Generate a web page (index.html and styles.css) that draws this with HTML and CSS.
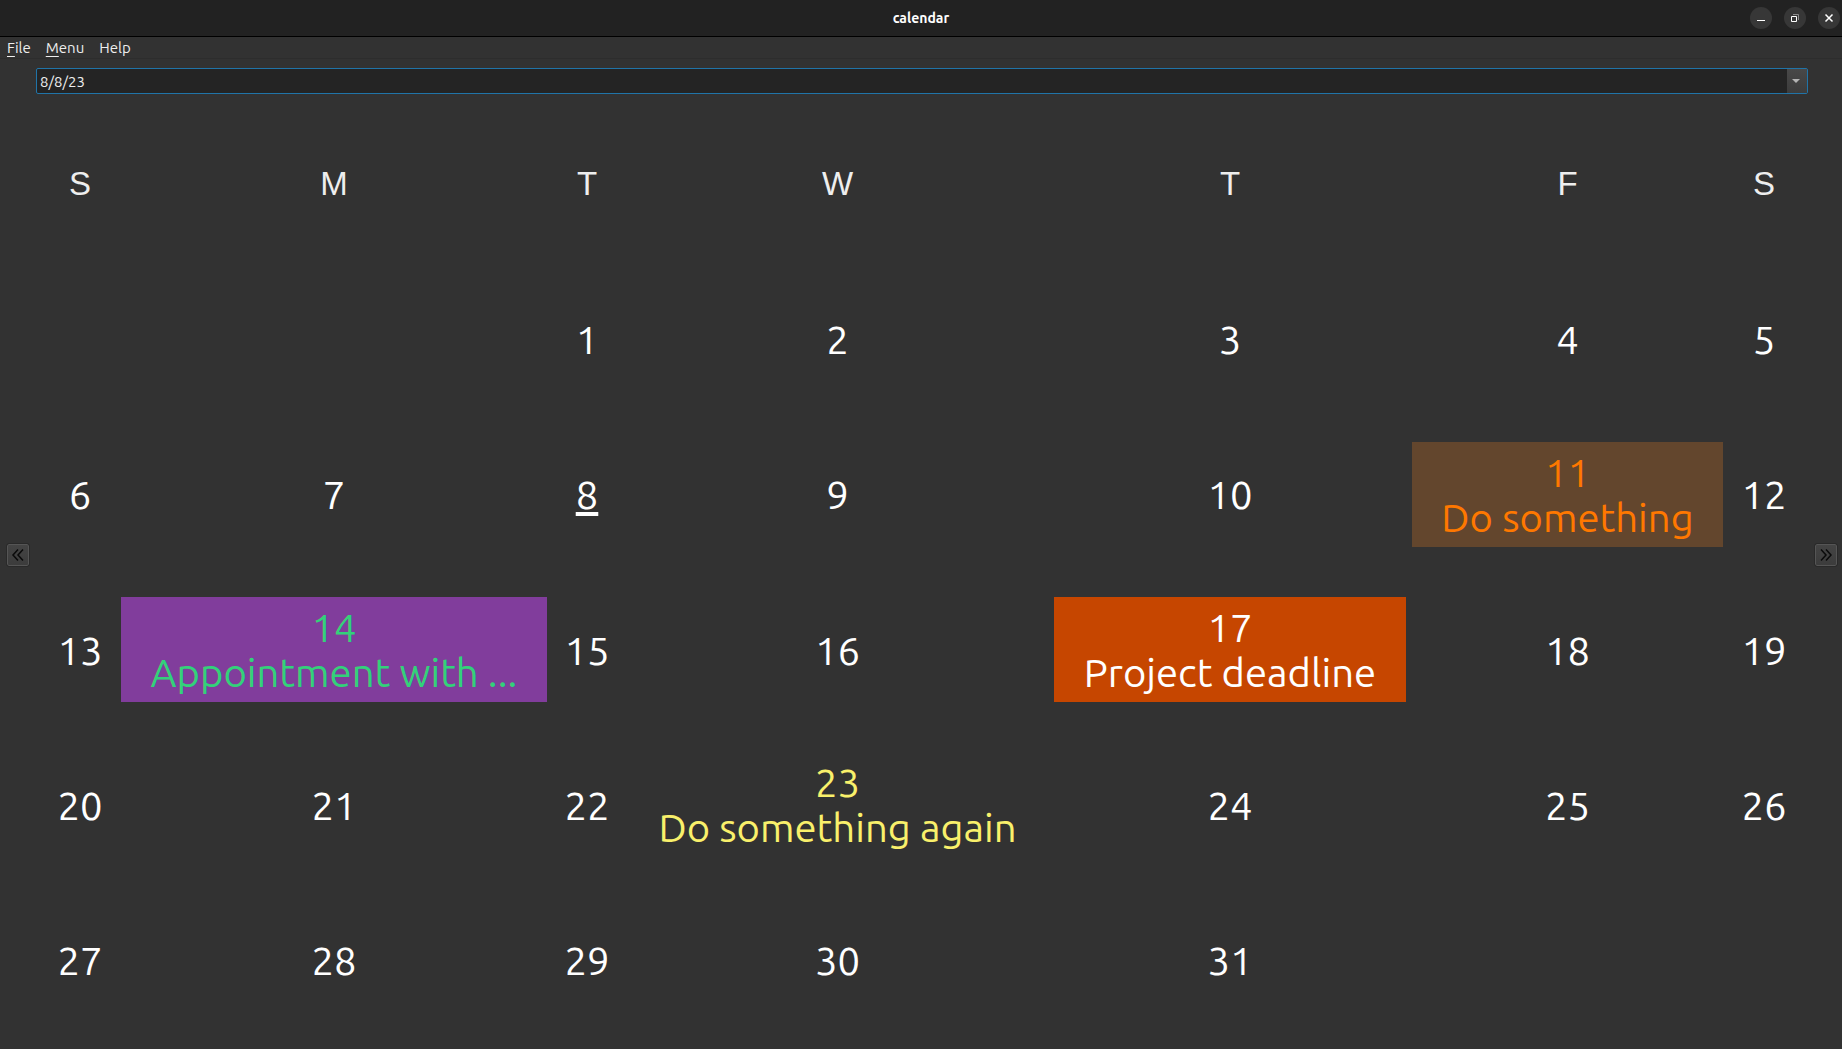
FILE: index.html
```html
<!DOCTYPE html>
<html lang="en">
<head>
<meta charset="utf-8">
<title>calendar</title>
<link rel="stylesheet" href="styles.css">
</head>
<body>
<header class="titlebar">
  <h1 class="title">calendar</h1>
  <div class="window-buttons">
    <button class="window-button" type="button" aria-label="Minimize"><svg width="22" height="22" viewBox="0 0 22 22"><path d="M7 13.5h8" stroke="#fff" fill="none"/></svg></button>
    <button class="window-button" type="button" aria-label="Restore"><svg width="22" height="22" viewBox="0 0 22 22"><path d="M9 7.5h5.500v5.500" stroke="#8c8c8c" fill="none"/><path d="M7.500 9.500h5v5h-5z" stroke="#fff" fill="none"/></svg></button>
    <button class="window-button" type="button" aria-label="Close"><svg width="22" height="22" viewBox="0 0 22 22"><path d="M7.500 7.500l7 7M14.500 7.500l-7 7" stroke="#fff" stroke-width="1.500" fill="none"/></svg></button>
  </div>
</header>
<nav class="menubar">
  <button type="button" class="menu"><u>F</u>ile</button>
  <button type="button" class="menu"><u>M</u>enu</button>
  <button type="button" class="menu">Help</button>
</nav>
<main class="content">
  <button class="nav-button" type="button" aria-label="Previous month"><svg width="20" height="20" viewBox="0 0 20 20"><path d="M10 4.500l-5 5.500 5 5.500M15 4.500l-5 5.500 5 5.500" stroke="#0a0a0a" stroke-width="1.500" fill="none"/></svg></button>
  <section class="month">
    <div class="date-box">
      <input class="date-input" type="text" value="8/8/23" aria-label="Date">
      <button class="date-drop" type="button" aria-label="Choose date"><svg width="8" height="4" viewBox="0 0 8 4"><path d="M0 0h8L4 4z" fill="#b4b4b4"/></svg></button>
    </div>
    <table class="days">
      <thead>
        <tr><th>S</th><th>M</th><th>T</th><th>W</th><th>T</th><th>F</th><th>S</th></tr>
      </thead>
      <tbody>
        <tr><td></td><td></td><td>1</td><td>2</td><td>3</td><td>4</td><td>5</td></tr>
        <tr><td>6</td><td>7</td><td class="today">8</td><td>9</td><td>10</td><td class="event brown">11<br>Do something</td><td>12</td></tr>
        <tr><td>13</td><td class="event purple">14<br>Appointment with ...</td><td>15</td><td>16</td><td class="event orange">17<br>Project deadline</td><td>18</td><td>19</td></tr>
        <tr><td>20</td><td>21</td><td>22</td><td class="event yellow">23<br>Do something again</td><td>24</td><td>25</td><td>26</td></tr>
        <tr><td>27</td><td>28</td><td>29</td><td>30</td><td>31</td><td></td><td></td></tr>
      </tbody>
    </table>
  </section>
  <button class="nav-button" type="button" aria-label="Next month"><svg width="20" height="20" viewBox="0 0 20 20"><path d="M5 4.500l5 5.500-5 5.500M10 4.500l5 5.500-5 5.500" stroke="#0a0a0a" stroke-width="1.500" fill="none"/></svg></button>
</main>
</body>
</html>
```

FILE: styles.css
```css
* {
  box-sizing: border-box;
}

body {
  margin: 0;
  min-height: 100vh;
  display: flex;
  flex-direction: column;
  background: #323232;
  color: #fff;
  font-family: Ubuntu, "Open Sans", "Noto Sans", sans-serif;
  font-size: 15px;
}

button,
input {
  margin: 0;
  padding: 0;
  border: 0;
  background: none;
  color: inherit;
  font: inherit;
}

.titlebar {
  display: grid;
  grid-template-columns: 1fr auto 1fr;
  align-items: center;
  height: 37px;
  background: #222;
  border-bottom: 1px solid #000;
}

.title {
  grid-column: 2;
  margin: 0;
  font-size: 14px;
  font-weight: 700;
  line-height: 20px;
}

.window-buttons {
  display: flex;
  justify-content: flex-end;
  gap: 12px;
  padding-right: 2px;
}

.window-button {
  width: 22px;
  height: 22px;
  border-radius: 50%;
  background: #373737;
}

.window-button svg,
.nav-button svg {
  display: block;
}

.menubar {
  display: flex;
  gap: 15px;
  height: 22px;
  padding-left: 7px;
  border-bottom: 1px solid #2d2d2d;
}

.menu {
  color: #eee;
  line-height: 20px;
}

.menu u,
.today {
  text-underline-offset: 3px;
}

.content {
  flex: 1;
  display: flex;
  align-items: center;
  gap: 7px;
  padding: 9px 5px 7px 7px;
}

.nav-button {
  flex: none;
  width: 22px;
  height: 22px;
  border: 1px solid #555;
  border-radius: 2px;
  outline: 1px solid #292929;
  background: linear-gradient(#444, #3c3c3c);
}

.month {
  flex: 1;
  align-self: stretch;
  display: flex;
  flex-direction: column;
  gap: 12px;
}

.date-box {
  display: flex;
  height: 26px;
  border: 1px solid #2074a8;
  border-radius: 2px;
  background: #242424;
}

.date-input {
  flex: 1;
  min-width: 0;
  padding-left: 3px;
  color: #eee;
  outline: 0;
}

.date-drop {
  display: flex;
  align-items: center;
  justify-content: center;
  width: 20px;
  padding-right: 2px;
  background: linear-gradient(#484848, #3c3c3c);
}

.days {
  flex: 1;
  display: grid;
  grid-template-columns: 70fr 426fr 68fr 421fr 352fr 311fr 70fr;
  grid-template-rows: repeat(6, 1fr);
  align-items: center;
  column-gap: 6px;
  margin: 0 9px 4px;
  text-align: center;
}

.days thead,
.days tbody,
.days tr {
  display: contents;
}

.days th {
  padding: 0;
  color: #eee;
  font: 33px/38px "Liberation Sans", Arial, sans-serif;
}

.days td {
  padding: 8px 0 7px;
  font-size: 40px;
  font-weight: 400;
  line-height: 45px;
  white-space: nowrap;
}

.today {
  text-decoration: underline;
}

.brown {
  background: #63462d;
  color: #ff7800;
}

.purple {
  background: #813d9c;
  color: #33d17a;
}

.orange {
  background: #c64600;
}

.yellow {
  color: #f9f06b;
}
```
